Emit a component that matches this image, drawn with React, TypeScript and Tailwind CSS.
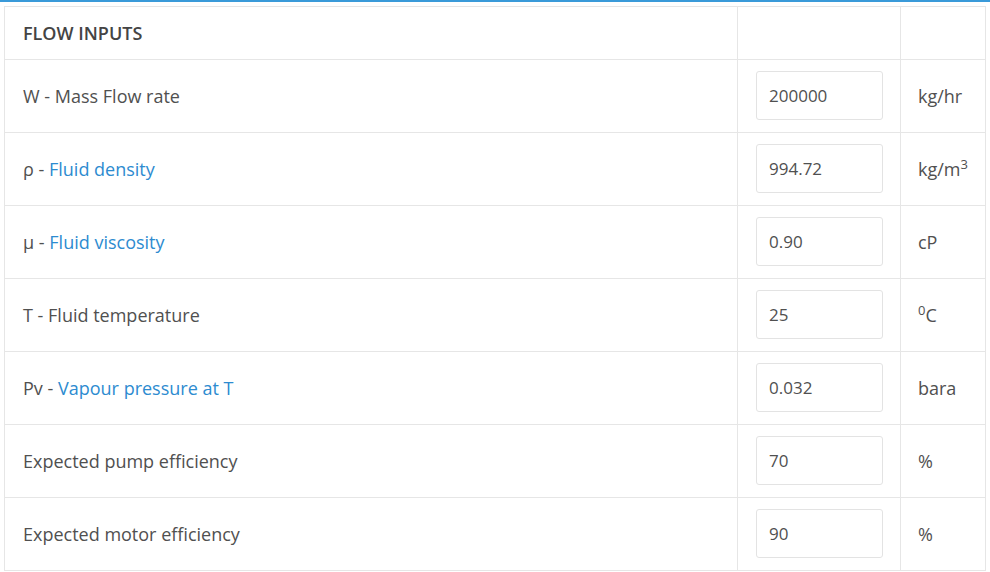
import React from "react";

type Row = {
  sym?: string;
  label: string;
  link?: boolean;
  value: string;
  unit: React.ReactNode;
};

const rows: Row[] = [
  { sym: "W", label: "Mass Flow rate", value: "200000", unit: "kg/hr" },
  {
    sym: "ρ",
    label: "Fluid density",
    link: true,
    value: "994.72",
    unit: (
      <>
        kg/m<sup className="text-[13px] relative -top-[7px]">3</sup>
      </>
    ),
  },
  { sym: "μ", label: "Fluid viscosity", link: true, value: "0.90", unit: "cP" },
  {
    sym: "T",
    label: "Fluid temperature",
    value: "25",
    unit: (
      <>
        <sup className="text-[13px] relative -top-[7px]">0</sup>C
      </>
    ),
  },
  { sym: "Pv", label: "Vapour pressure at T", link: true, value: "0.032", unit: "bara" },
  { label: "Expected pump efficiency", value: "70", unit: "%" },
  { label: "Expected motor efficiency", value: "90", unit: "%" },
];

export default function App() {
  return (
    <div className="min-h-screen bg-white font-['Open_Sans',sans-serif] text-[#505050]">
      <div className="h-[2px] bg-[#3a9ad9]" />
      <div className="pt-1 pl-1">
        <table className="border-collapse w-[982px] table-fixed">
          <colgroup>
            <col className="w-[733px]" />
            <col className="w-[163px]" />
            <col className="w-[85px]" />
          </colgroup>
          <thead>
            <tr className="h-[53px]">
              <th className="border border-[#e6e6e6] px-[18px] text-left text-[18px] font-semibold text-[#444]">
                FLOW INPUTS
              </th>
              <th className="border border-[#e6e6e6]" />
              <th className="border border-[#e6e6e6]" />
            </tr>
          </thead>
          <tbody>
            {rows.map((r) => (
              <tr key={r.label} className="h-[73px]">
                <td className="border border-[#e6e6e6] px-[18px] text-[18px]">
                  {r.sym && <span>{r.sym} - </span>}
                  <span className={r.link ? "text-[#2d8bd0]" : ""}>{r.label}</span>
                </td>
                <td className="border border-[#e6e6e6] px-[18px] pb-[2px]">
                  <input
                    readOnly
                    value={r.value}
                    className="w-[127px] h-[49px] rounded-[3px] border border-[#e3e3e3] px-3 text-[17px] text-[#505050] outline-none"
                  />
                </td>
                <td className="border border-[#e6e6e6] px-[17px] text-[18px] whitespace-nowrap">
                  {r.unit}
                </td>
              </tr>
            ))}
          </tbody>
        </table>
      </div>
    </div>
  );
}
